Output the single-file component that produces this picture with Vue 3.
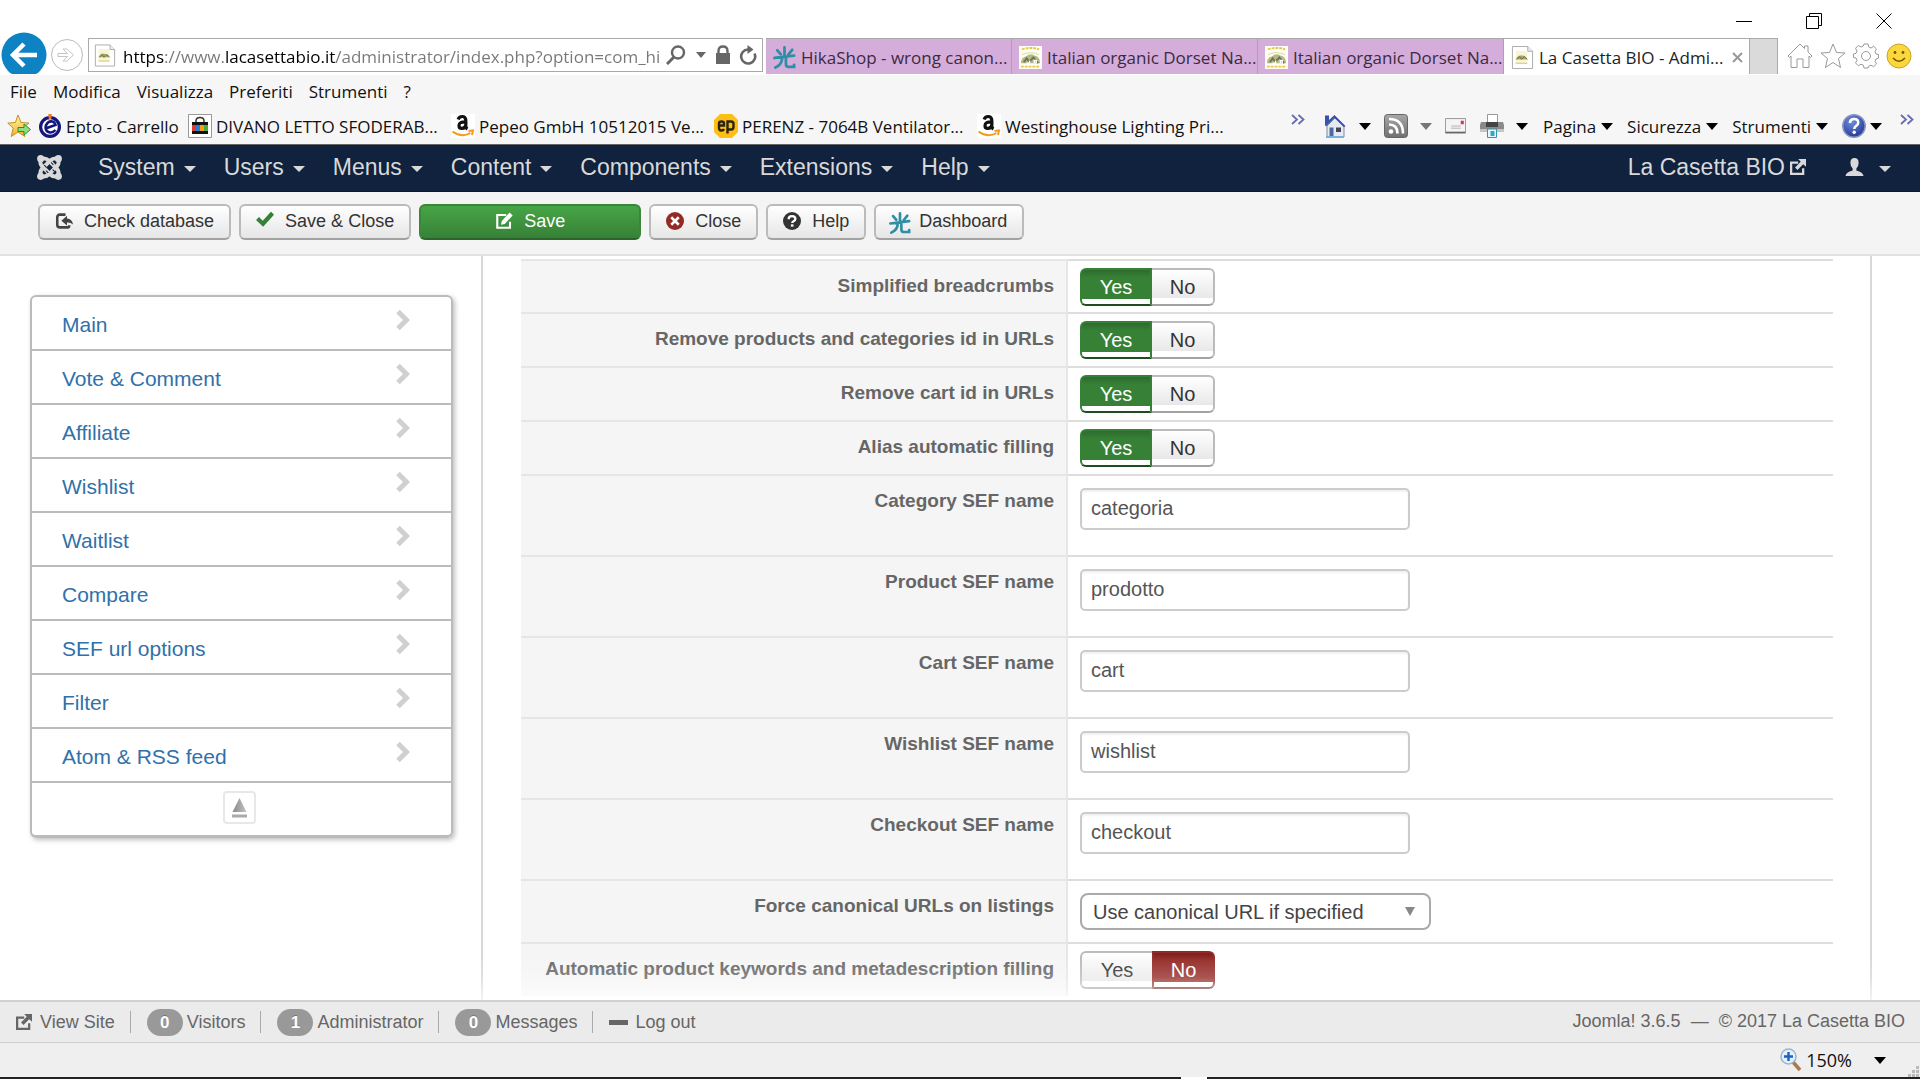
<script setup>
import { ref } from 'vue'

const address = ref('https://www.lacasettabio.it/administrator/index.php?option=com_hi')

const tabs = [
  { icon: 'hika', title: 'HikaShop - wrong canon...' },
  { icon: 'bio', title: 'Italian organic Dorset Na...' },
  { icon: 'bio', title: 'Italian organic Dorset Na...' },
  { icon: 'page', title: 'La Casetta BIO - Admi...', active: true }
]

const fileMenu = ['File', 'Modifica', 'Visualizza', 'Preferiti', 'Strumenti', '?']

const bookmarks = [
  { icon: 'epto', title: 'Epto - Carrello' },
  { icon: 'bag', title: 'DIVANO LETTO SFODERAB...' },
  { icon: 'amazon', title: 'Pepeo GmbH 10512015 Ve...' },
  { icon: 'ep', title: 'PERENZ - 7064B Ventilator...' },
  { icon: 'amazon', title: 'Westinghouse Lighting Pri...' }
]

const commands = ['Pagina', 'Sicurezza', 'Strumenti']

const adminMenu = ['System', 'Users', 'Menus', 'Content', 'Components', 'Extensions', 'Help']

const tools = [
  { icon: 'check-db', label: 'Check database' },
  { icon: 'tick', label: 'Save & Close' },
  { icon: 'edit', label: 'Save', primary: true },
  { icon: 'cancel', label: 'Close' },
  { icon: 'question', label: 'Help' },
  { icon: 'hika', label: 'Dashboard' }
]

const sections = [
  'Main', 'Vote & Comment', 'Affiliate', 'Wishlist', 'Waitlist',
  'Compare', 'SEF url options', 'Filter', 'Atom & RSS feed'
]

const settings = ref([
  { id: 'breadcrumbs', type: 'toggle', label: 'Simplified breadcrumbs', value: 'Yes' },
  { id: 'remove-id', type: 'toggle', label: 'Remove products and categories id in URLs', value: 'Yes' },
  { id: 'remove-cart-id', type: 'toggle', label: 'Remove cart id in URLs', value: 'Yes' },
  { id: 'alias', type: 'toggle', label: 'Alias automatic filling', value: 'Yes' },
  { id: 'category-sef', type: 'text', label: 'Category SEF name', value: 'categoria' },
  { id: 'product-sef', type: 'text', label: 'Product SEF name', value: 'prodotto' },
  { id: 'cart-sef', type: 'text', label: 'Cart SEF name', value: 'cart' },
  { id: 'wishlist-sef', type: 'text', label: 'Wishlist SEF name', value: 'wishlist' },
  { id: 'checkout-sef', type: 'text', label: 'Checkout SEF name', value: 'checkout' },
  { id: 'canonical', type: 'select', label: 'Force canonical URLs on listings', value: 'Use canonical URL if specified' },
  { id: 'keywords', type: 'toggle', label: 'Automatic product keywords and metadescription filling', value: 'No' }
])

const counters = [
  { count: 0, label: 'Visitors' },
  { count: 1, label: 'Administrator' },
  { count: 0, label: 'Messages' }
]
</script>

<template>
  <div class="window">
    <svg class="defs" aria-hidden="true">
      <linearGradient id="g-star" x1="0" y1="0" x2="0" y2="1"><stop offset="0" stop-color="#fff6b0" /><stop offset="1" stop-color="#f0b429" /></linearGradient>
      <linearGradient id="g-rss" x1="0" y1="0" x2="0" y2="1"><stop offset="0" stop-color="#a8a8a8" /><stop offset="1" stop-color="#707070" /></linearGradient>
      <radialGradient id="g-help" cx=".4" cy=".3" r=".8"><stop offset="0" stop-color="#6f8fe0" /><stop offset="1" stop-color="#1c3190" /></radialGradient>
      <linearGradient id="g-up" x1="0" y1="0" x2="1" y2="0"><stop offset="0" stop-color="#888" /><stop offset="1" stop-color="#c4c4c4" /></linearGradient>
      <symbol id="hika" viewBox="0 0 24 24">
        <g fill="none" stroke="#2f8ea3" stroke-width="2.9" stroke-linecap="round"><path d="M12 1.500V11M4.500 4.500l3.500 4M20 4l-4 5M1.500 12.500L22 10M9.500 12.500C9.500 17 7 20.500 2.500 22.500M13.500 12v7c0 2 1 2.800 3 2.800h5.500v-2" /></g>
      </symbol>
      <symbol id="bio" viewBox="0 0 24 24">
        <path fill="#fffef4" d="M0 0h24v24H0z" /><path d="M3 3.500q9-3 18 0M2 21.500h20" stroke="#e5c94a" stroke-width="2" stroke-dasharray="3 1" fill="none" />
        <path d="M2 18q0-6 5-7q5-4 9-1q6 1 6 8z" fill="#b5b98a" /><path d="M5 17l3-4 3 4M11 16l4-4 5 6" stroke="#6d774e" stroke-width="2" fill="none" /><path d="M8 18h3v-3M16 18v-3h2v3" stroke="#fff" stroke-width="1.500" fill="none" /><path d="M3 9q9-4 18 0" stroke="#d6d99a" fill="none" />
      </symbol>
      <symbol id="page" viewBox="0 0 24 24">
        <path d="M1.500.5h16l5 5v18h-21z" fill="#fff" stroke="#a9a9a9" /><path d="M17.500.5v5h5" fill="#eee" stroke="#a9a9a9" /><path d="M5 5h12v14H5z" fill="#f8f4d4" /><path d="M5 14q2-5 6-4q5 0 6 4z" fill="#a4a96b" /><path d="M6 14l3-3 2 3 3-3 3 3" stroke="#6a724c" fill="none" /><path d="M5 18h12" stroke="#dcc564" />
      </symbol>
      <symbol id="epto" viewBox="0 0 24 24">
        <circle cx="12" cy="13" r="9.400" fill="#fff" stroke="#14157d" stroke-width="3.200" /><path d="M7.500 14.500l10-3.500c-1-4-5-4.500-7.500-2.500-3.500 3-3 8 .5 9.500 2.500 1 5 .2 7-2" fill="none" stroke="#14157d" stroke-width="2.600" /><path d="M10.300 0h3.400l-.5 5h-2.400z" fill="#f17a21" />
      </symbol>
      <symbol id="bag" viewBox="0 0 24 24">
        <path d="M.5.5h23v23H.5z" fill="#fff" stroke="#999" /><path d="M8 9V7q0-3.500 4-3.500T16 7v2" fill="none" stroke="#333" stroke-width="1.500" /><path d="M4 8h16v12H4z" fill="#111" /><path d="M4 11h4v6H4z" fill="#e03c31" /><path d="M8 11h4v6H8z" fill="#2e7bd0" /><path d="M12 11h4v6h-4z" fill="#f1a01e" /><path d="M16 11h4v6h-4z" fill="#53a735" />
      </symbol>
      <symbol id="amazon" viewBox="0 0 24 24">
        <path fill="#fff" d="M0 0h24v24H0z" /><path d="M7.200 5.500Q8 2.500 11.200 2.500t3.600 3.500V12q0 2 1.700 3M15 7.800q-7-.3-7 3.600 0 3 2.700 3 4.300 0 4.300-6" fill="none" stroke="#111" stroke-width="3.200" /><path d="M1.500 17.500q9 6.500 18 1.500M17.500 17l4.500-.5-1 4.500" fill="none" stroke="#f79b1c" stroke-width="2" />
      </symbol>
      <symbol id="ep" viewBox="0 0 24 24">
        <path d="M6 0h12l6 6v12l-6 6H6l-6-6V6z" fill="#fdbf13" /><path d="M5 11.500h5V9.500q0-2-2.500-2T5 9.500V14q0 2.500 2.500 2.500 2 0 2.500-1.500M13.500 19.500V7.500H17q2.500 0 2.500 2.500v3q0 2.500-2.500 2.500h-3" fill="none" stroke="#2b2410" stroke-width="2.400" />
      </symbol>
      <symbol id="fav-add" viewBox="0 0 24 24">
        <path d="M11 1l3 7.500 8 .6-6.200 5 2 8.400L11 18l-6.800 4.500 2-8.400L.8 9.100l7.600-.6z" fill="url(#g-star)" stroke="#c98f1c" /><path d="M11 13.500h6v-3.500l6.500 5.500-6.500 5.500v-3.500h-6z" fill="#8be07d" stroke="#2f8b2f" />
      </symbol>
      <symbol id="house" viewBox="0 0 24 24">
        <path d="M4 12l8-8 9 8v11H4z" fill="#e4e9f2" stroke="#7c8aa6" /><path d="M2 1.500h4V6l5.500-5L22.500 12l-1.500 1.300L11.500 4 3 12.500 2 11z" fill="#3a52ad" /><path d="M6.500 13.500h4v9h-4z" fill="#4c6aa0" /><path d="M13 13.500h5v4.500h-5z" fill="#445" /><path d="M3 23h18" stroke="#78b0d8" stroke-width="2" />
      </symbol>
      <symbol id="rss" viewBox="0 0 24 24">
        <rect x=".5" y=".5" width="23" height="23" rx="3" fill="url(#g-rss)" stroke="#666" /><circle cx="7" cy="17.500" r="2.300" fill="#fff" /><path d="M5 10.500q8.500 0 8.500 9M5 5q14 0 14 14.500" fill="none" stroke="#fff" stroke-width="2.600" />
      </symbol>
      <symbol id="mail" viewBox="0 0 24 18">
        <path d="M.5.5h23v16H.5z" fill="#f4f4f4" stroke="#8b8b8b" /><path d="M.5 16.500h23" stroke="#666" stroke-width="2" /><path d="M7 9h11M7 11.500h11" stroke="#aaa" /><path d="M18 3h3.500v4H18z" fill="#d23a50" />
      </symbol>
      <symbol id="printer" viewBox="0 0 24 24">
        <path d="M7.500.5h10v9h-10z" fill="#fff" stroke="#999" /><path d="M1 8h22l1 3v7H0v-7z" fill="#8a8a8a" /><path d="M6 8h12v5H6z" fill="#444" /><path d="M0 15h24v3H0z" fill="#c5c5c5" /><path d="M7.500 15h9v8.500h-9z" fill="#e8f7fc" stroke="#3693ab" /><path d="M10.500 17h4v5h-4z" fill="#30a7c9" />
      </symbol>
      <symbol id="help-ball" viewBox="0 0 24 24">
        <circle cx="12" cy="12" r="11.200" fill="url(#g-help)" stroke="#8c97bd" stroke-width="1.500" /><path d="M8 9q0-4 4.200-4T16.200 8.800q0 2-2.200 3.200-1.700 1-1.700 3" fill="none" stroke="#fff" stroke-width="2.600" /><circle cx="12.200" cy="18.300" r="1.700" fill="#fff" />
      </symbol>
      <symbol id="check-db" viewBox="0 0 24 24">
        <path d="M14 3.500H6.500Q3 3.500 3 7v10q0 3.500 3.500 3.500H17q2 0 2-3" fill="none" stroke="#444" stroke-width="3.400" /><path d="M8.500 11.500L16 5v3.500q7 .5 8 8-3.500-3-8-2.500v4z" fill="#444" />
      </symbol>
      <symbol id="tick" viewBox="0 0 24 24"><path d="M0 10.500l4-4 5 5L20-.5l4 4L9.500 19.500z" fill="#378137" /></symbol>
      <symbol id="edit" viewBox="0 0 24 24">
        <path d="M15 4H3v17h17V13" fill="none" stroke="currentColor" stroke-width="2.800" /><path d="M8 17l1-5L19.500.8l4 3.700L13 16z" fill="currentColor" />
      </symbol>
      <symbol id="newtab" viewBox="0 0 24 24">
        <path d="M13 5H3v16h17V13" fill="none" stroke="currentColor" stroke-width="3.200" /><path d="M13 0h11v11l-4-3.500-8 8L8.500 12l8-8z" fill="currentColor" />
      </symbol>
      <symbol id="cancel" viewBox="0 0 24 24"><circle cx="12" cy="12" r="12" fill="#942a25" /><path d="M7 7l10 10M17 7L7 17" stroke="#fff" stroke-width="3.400" /></symbol>
      <symbol id="question" viewBox="0 0 24 24"><circle cx="12" cy="12" r="12" fill="#333" /><path d="M7.500 9.500Q7.500 5.500 12 5.500t4.500 3.700q0 2-2.500 3-1.700.8-1.700 2.600" fill="none" stroke="#fff" stroke-width="3" /><path d="M10.500 16.500h3.500v3h-3.500z" fill="#fff" /></symbol>
      <symbol id="joomla" viewBox="0 0 24 24">
        <g fill="currentColor"><circle cx="3.500" cy="3.500" r="3.400" /><circle cx="20.500" cy="3.500" r="3.400" /><circle cx="3.500" cy="20.500" r="3.400" /><circle cx="20.500" cy="20.500" r="3.400" /></g>
        <g fill="none" stroke="currentColor" stroke-width="3.800"><path d="M3.500 20Q2.500 15.500 5 13L12.500 5.500Q15.500 2.500 20 3.500" /><path d="M4 3.500Q8.500 2.500 11.500 5.500L19 13Q21.500 15.500 20.500 20" /><path d="M3.500 4Q2.500 8.500 5 11L12.500 18.500Q15.500 21.500 20 20.500" /><path d="M20.500 4Q21.500 8.500 19 11L11.500 18.500Q8.500 21.500 4 20.500" /></g>
        <path d="M7 9.800l2 2M13.500 7.200l2.200 2.200M15 14l2 2M8.600 15l2.200 2.200" stroke="#10223e" stroke-width="1" />
      </symbol>
      <symbol id="user" viewBox="0 0 24 24"><path d="M12 0q5.500 0 5.500 6.500 0 4.500-3 7.500v2.500q9 2 9.500 7.500H0q.5-5.500 9.500-7.500V14q-3-3-3-7.500Q6.500 0 12 0z" fill="currentColor" /></symbol>
    </svg>

    <header class="chrome">
      <div class="titlebar">
        <button class="win" aria-label="Riduci"><svg width="16" height="16" viewBox="0 0 16 16"><path d="M0 8.500h16" stroke="#000" /></svg></button>
        <button class="win" aria-label="Ripristina"><svg width="16" height="16" viewBox="0 0 16 16"><path d="M.5 3.500h12v12H.5zM3.500 3.500v-3h12v12h-3" fill="none" stroke="#000" /></svg></button>
        <button class="win" aria-label="Chiudi"><svg width="16" height="16" viewBox="0 0 16 16"><path d="M.5.5l15 15M15.500.5l-15 15" stroke="#000" /></svg></button>
      </div>

      <div class="navrow">
        <button class="back" aria-label="Indietro"><svg width="46" height="42" viewBox="0 0 46 42"><circle cx="23" cy="23" r="22.500" fill="#0d83c4" /><path d="M36 23H13M23 12L12 23l11 11" fill="none" stroke="#fff" stroke-width="4.500" /></svg></button>
        <button class="forward" aria-label="Avanti"><svg width="34" height="34" viewBox="0 0 34 34"><circle cx="17" cy="17" r="15.500" fill="#fff" stroke="#bbb" /><path d="M8 15.500h9.500L13 11h4l6.500 6-6.500 6h-4l4.500-4.500H8z" fill="none" stroke="#c4c4c4" /></svg></button>
        <div class="address">
          <svg width="22" height="23"><use href="#page" /></svg>
          <input v-model="address" aria-label="Indirizzo" spellcheck="false">
          <svg width="20" height="20" viewBox="0 0 20 20"><circle cx="12" cy="7.500" r="6" fill="none" stroke="#666" stroke-width="2.400" /><path d="M8 12l-7 7" stroke="#666" stroke-width="3" /></svg>
          <i class="arrow small"></i>
          <svg class="lock" width="16" height="20" viewBox="0 0 16 20"><path d="M3.500 9V6q0-4.500 4.500-4.500T12.500 6v3" fill="none" stroke="#666" stroke-width="2.400" /><path d="M1 8h14v11H1z" fill="#666" /></svg>
          <svg width="18" height="20" viewBox="0 0 18 20"><path d="M15.500 8.500A7 7 0 1 1 9 4.500" fill="none" stroke="#666" stroke-width="2.600" /><path d="M8.500 0v9l6-4.500z" fill="#666" /></svg>
        </div>
        <nav class="tabs">
          <a v-for="(tab, i) in tabs" :key="i" href="#" class="tab" :class="{ active: tab.active }">
            <svg width="23" height="23"><use :href="'#' + tab.icon" /></svg><span>{{ tab.title }}</span>
            <svg v-if="tab.active" class="tab-close" width="11" height="11" viewBox="0 0 11 11"><path d="M1 1l9 9M10 1l-9 9" stroke="#999" stroke-width="2" /></svg>
          </a>
          <button class="newtab" aria-label="Nuova scheda"></button>
        </nav>
        <div class="shortcuts">
          <svg width="26" height="26" viewBox="0 0 26 26"><path d="M1 13L13 1l4.500 4.500V3H21v6l4 4-1.500 1.500L22 13v11.500h-6V16h-6v8.500H4V13l-1.500 1.500z" fill="#fff" stroke="#999" /></svg>
          <svg width="26" height="26" viewBox="0 0 26 26"><path d="M13 1l3.500 8.500 8.500.5-6.500 5.500 2 9L13 19.500l-7.500 5 2-9L1 10l8.500-.5z" fill="#fff" stroke="#999" /></svg>
          <svg width="26" height="26" viewBox="0 0 26 26"><path d="M11 1h4l.7 3 2.300 1 2.700-1.700 2.800 2.800L22 8.700l1 2.300 2.500.5v3.700l-2.500.8-1 2.300 1.500 2.600-2.800 2.800-2.700-1.500-2.300 1L15 25h-4l-.7-2.800-2.300-1-2.700 1.500-2.800-2.800L4 17.300 3 15l-2.500-.5V11L3 10.300 4 8 2.500 5.300l2.800-2.800L8 4l2.300-1z" fill="#fff" stroke="#999" /><circle cx="13" cy="13" r="4.500" fill="none" stroke="#999" /></svg>
          <svg width="26" height="26" viewBox="0 0 26 26"><circle cx="13" cy="13" r="12" fill="#fcd73b" stroke="#cba32b" /><circle cx="9" cy="9.500" r="1.400" fill="#6e5200" /><circle cx="17" cy="9.500" r="1.400" fill="#6e5200" /><path d="M7 15q6 6.500 12 0" fill="none" stroke="#6e5200" stroke-width="1.500" /></svg>
        </div>
      </div>

      <div class="bars">
        <nav class="filemenu"><button v-for="item in fileMenu" :key="item">{{ item }}</button></nav>
        <div class="linkbar">
          <nav class="bookmarks">
            <button class="fav" aria-label="Aggiungi ai preferiti"><svg width="24" height="24"><use href="#fav-add" /></svg></button>
            <a v-for="(mark, i) in bookmarks" :key="i" href="#"><svg width="24" height="24"><use :href="'#' + mark.icon" /></svg>{{ mark.title }}</a>
          </nav>
          <div class="commands">
            <button class="more" aria-label="Altri preferiti"><svg width="14" height="11" viewBox="0 0 14 11"><path d="M1 1l5 4.500L1 10M7.500 1l5 4.500-5 4.500" fill="none" stroke="#6a6ab0" stroke-width="1.800" /></svg></button>
            <button class="pic" aria-label="Home"><svg width="24" height="24"><use href="#house" /></svg><i class="arrow"></i></button>
            <button class="pic" aria-label="Feed"><svg width="24" height="24"><use href="#rss" /></svg><i class="arrow faded"></i></button>
            <button class="letter" aria-label="Posta"><svg width="21" height="16"><use href="#mail" /></svg></button>
            <button class="pic last" aria-label="Stampa"><svg width="24" height="24"><use href="#printer" /></svg><i class="arrow"></i></button>
            <button v-for="item in commands" :key="item" class="word">{{ item }}<i class="arrow"></i></button>
            <button class="word tight" aria-label="Guida"><svg width="24" height="24"><use href="#help-ball" /></svg><i class="arrow"></i></button>
            <button class="more end" aria-label="Altri comandi"><svg width="14" height="11" viewBox="0 0 14 11"><path d="M1 1l5 4.500L1 10M7.500 1l5 4.500-5 4.500" fill="none" stroke="#6a6ab0" stroke-width="1.800" /></svg></button>
          </div>
        </div>
      </div>
    </header>

    <nav class="adminbar">
      <a href="#" class="brand" aria-label="Joomla"><svg width="25" height="25"><use href="#joomla" /></svg></a>
      <a v-for="item in adminMenu" :key="item" href="#" class="entry">{{ item }}<i class="caret"></i></a>
      <a href="#" class="site">La Casetta BIO<svg width="17" height="17"><use href="#newtab" /></svg></a>
      <a href="#" class="account" aria-label="Account"><svg width="19" height="18"><use href="#user" /></svg><i class="caret"></i></a>
    </nav>

    <div class="toolbar">
      <button v-for="tool in tools" :key="tool.label" class="tool" :class="{ primary: tool.primary }">
        <svg v-if="tool.icon === 'hika'" class="low" width="22" height="22"><use href="#hika" /></svg>
        <svg v-else width="18" height="18"><use :href="'#' + tool.icon" /></svg>{{ tool.label }}
      </button>
    </div>

    <main class="workspace">
      <aside class="side">
        <nav class="sections">
          <a v-for="item in sections" :key="item" href="#">{{ item }}<svg width="14" height="22" viewBox="0 0 14 22"><path d="M2 2.500l8.500 8.500L2 19.500" fill="none" stroke="#d0d0d0" stroke-width="5" /></svg></a>
          <div class="totop"><button aria-label="Torna su"><svg width="15" height="20" viewBox="0 0 15 20"><path d="M7.500 0L14.500 14H.5z" fill="url(#g-up)" /><path d="M0 16.500h15v3H0z" fill="#aaa" /></svg></button></div>
        </nav>
      </aside>

      <section class="panel">
        <table>
          <tbody>
            <tr v-for="row in settings" :key="row.id" :class="row.type">
              <th scope="row"><label :for="row.type === 'toggle' ? row.id + '-' + row.value : row.id">{{ row.label }}</label></th>
              <td>
                <div v-if="row.type === 'toggle'" class="switch" role="radiogroup" :aria-label="row.label">
                  <template v-for="choice in ['Yes', 'No']" :key="choice">
                    <input :id="row.id + '-' + choice" v-model="row.value" type="radio" :name="row.id" :value="choice">
                    <label :for="row.id + '-' + choice" :class="choice.toLowerCase()">{{ choice }}</label>
                  </template>
                </div>
                <input v-else-if="row.type === 'text'" :id="row.id" v-model="row.value" class="field" type="text">
                <div v-else class="picker">
                  <select :id="row.id" v-model="row.value"><option>Use canonical URL if specified</option></select>
                  <i></i>
                </div>
              </td>
            </tr>
          </tbody>
        </table>
      </section>
    </main>

    <footer class="sitebar">
      <a href="#" class="first"><svg width="17" height="17"><use href="#newtab" /></svg>View Site</a>
      <a v-for="item in counters" :key="item.label" href="#" class="counter"><b>{{ item.count }}</b>{{ item.label }}</a>
      <a href="#" class="logout"><svg width="19" height="5"><path d="M0 0h19v5H0z" fill="#666" /></svg>Log out</a>
      <p>Joomla! 3.6.5 &nbsp;—&nbsp; © 2017 La Casetta BIO</p>
    </footer>

    <div class="status">
      <button class="zoom">
        <svg width="22" height="24" viewBox="0 0 22 24"><path d="M13 14l7 8" stroke="#a87b51" stroke-width="3.500" /><circle cx="8.500" cy="8.500" r="7.500" fill="#e4f1fc" stroke="#9fb4cc" stroke-width="1.500" /><path d="M8.500 4v9M4 8.500h9" stroke="#1c62c4" stroke-width="2.400" /></svg>
        <span>150%</span><i class="arrow small dark"></i>
      </button>
      <svg class="grip" width="12" height="12" viewBox="0 0 12 12"><path d="M0 9h3v3H0zM4 9h3v3H4zM8 9h3v3H8zM4 5h3v3H4zM8 5h3v3H8zM8 1h3v3H8z" fill="#bbb" /></svg>
    </div>
    <div class="taskbar"><span></span><b></b><span></span></div>
  </div>
</template>

<style>
body { margin: 0; background: #fff; }
</style>

<style scoped>
* { box-sizing: border-box; }
.window { font-family: "Liberation Sans", Arial, sans-serif; color: #333; }
.defs { position: absolute; width: 0; height: 0; }
svg { flex: none; display: block; }
a { color: inherit; text-decoration: none; }
button { border: 0; padding: 0; background: none; font: inherit; color: inherit; }
input, select { font: inherit; color: inherit; outline: 0; }

.chrome { font-family: "Open Sans", "Noto Sans", sans-serif; font-size: 17px; color: #111; }
.titlebar { height: 38px; display: flex; justify-content: flex-end; align-items: center; gap: 54px; padding: 4px 28px 0 0; }
.navrow { height: 37px; display: flex; align-items: flex-start; padding-left: 1px; }
.back { margin-top: -6px; }
.forward { margin-left: 3px; }
.address { flex: 1; min-width: 0; height: 34px; margin-left: 4px; padding: 0 5px; display: flex; align-items: center; border: 1px solid #aaa; }
.address input {
  flex: 1; min-width: 0; height: 30px; border: 0; padding: 2px 0 0; margin: 0 4px 0 7px;
  background: linear-gradient(90deg, #000 41px, #777 41px 101px, #000 101px 213px, #777 213px);
  -webkit-background-clip: text; background-clip: text; -webkit-text-fill-color: transparent;
}
.address .arrow { margin: 0 9px 0 10px; }
.lock { margin-right: 8px; }
.arrow { flex: none; width: 0; height: 0; border: 6px solid transparent; border-top: 7px solid #000; border-bottom: 0; }
.arrow.small { border-width: 5px; border-top-width: 6px; border-top-color: #666; border-bottom: 0; }
.arrow.dark { border-width: 7px 6px 0; border-top-color: #000; }
.arrow.faded { border-top-color: #777; }
.tabs { display: flex; height: 36px; margin-left: 3px; }
.tab { width: 246px; display: flex; align-items: center; gap: 5px; padding: 2px 0 0 7px; background: #d5addb; border-top: 1px solid #aaa; border-right: 1px solid #b49abb; color: #3a2b3d; white-space: nowrap; }
.tab.active { background: #fff; color: #222; border-right-color: #aaa; }
.tab-close { margin-left: auto; margin-right: 6px; }
.newtab { width: 28px; background: #dadada; border: solid #aaa; border-width: 1px 1px 0 0; }
.shortcuts { display: flex; gap: 7px; padding: 5px 8px 0 9px; }

.bars { background: #f6f6f6; border-bottom: 1px solid #666; height: 70px; }
.filemenu { display: flex; gap: 16px; padding-left: 10px; height: 33px; align-items: center; }
.linkbar { display: flex; height: 36px; align-items: center; }
.bookmarks { flex: 1; display: flex; align-items: center; padding-left: 7px; min-width: 0; white-space: nowrap; }
.bookmarks a { display: flex; align-items: center; gap: 4px; width: 263px; }
.bookmarks a:nth-of-type(1) { width: 150px; }
.fav { margin-right: 7px; }
.commands { flex: none; display: flex; align-items: center; }
.commands button { display: flex; align-items: center; }
.commands .pic { gap: 12px; padding-right: 13px; }
.commands .pic.last { padding-right: 15px; }
.commands .letter { padding-right: 14px; }
.commands .word { gap: 5px; padding-right: 14px; }
.commands .tight { gap: 4px; padding-right: 18px; }
.commands .more { align-self: flex-start; padding-right: 18px; }
.commands .more.end { padding-right: 6px; }

.adminbar { height: 47px; background: #10223e; border-bottom: 1px solid #0b172a; display: flex; align-items: center; padding: 0 29px 2px 37px; font-size: 23px; color: #d9d9d9; }
.adminbar a { display: flex; align-items: center; }
.brand { margin-right: 36px; }
.entry { gap: 9px; margin-right: 28px; }
.caret { width: 0; height: 0; border: 6px solid transparent; border-top: 6px solid #d9d9d9; border-bottom: 0; margin-top: 4px; }
.site { gap: 4px; margin-left: auto; }
.account { gap: 15px; margin-left: 39px; }

.toolbar { height: 64px; background: #f4f4f4; border-bottom: 2px solid #e2e2e2; padding: 12px 38px; display: flex; gap: 8px; align-items: flex-start; }
.tool { height: 36px; display: flex; align-items: center; justify-content: center; gap: 11px; padding: 0 15px 2px; font-size: 18px; color: #333; border: 2px solid #bbb; border-bottom-color: #a2a2a2; border-radius: 6px; background: linear-gradient(#fff, #e6e6e6); }
.tool .low { margin: 4px -3px 0 -2px; }
.tool.primary { width: 222px; color: #fff; border-color: #3a873a; border-bottom-color: #2b652b; background: linear-gradient(#46a546, #378137); }

.workspace { position: relative; display: flex; }
.workspace::after { content: ""; position: absolute; left: 456px; right: 0; bottom: 0; height: 46px; background: linear-gradient(rgba(255, 255, 255, 0), rgba(255, 255, 255, .2) 50%, rgba(255, 255, 255, .7)); pointer-events: none; }
.side { flex: none; width: 481px; padding: 39px 28px 0 30px; }
.sections { border: 2px solid #bbb; border-bottom-width: 3px; border-radius: 6px; box-shadow: 2px 2px 5px rgba(0, 0, 0, .25); font-size: 21px; color: #3071a9; }
.sections a { height: 54px; display: flex; justify-content: space-between; align-items: center; padding: 4px 41px 0 30px; border-bottom: 2px solid #bbb; }
.sections a svg { margin-top: -10px; }
.totop { height: 52px; display: flex; justify-content: center; align-items: center; padding: 0 5px 3px 0; }
.totop button { width: 33px; height: 33px; display: flex; align-items: center; justify-content: center; border: 2px solid #e8e8e8; border-radius: 4px; }

.panel { flex: 1; margin-right: 48px; padding: 3px 37px 4px 38px; border: solid #d8d8d8; border-width: 0 2px; }
table { width: 100%; border-collapse: separate; border-spacing: 0; }
th, td { padding: 0; border-top: 2px solid #ddd; vertical-align: top; text-align: left; }
th { width: 547px; padding: 14px 12px 0 0; border-right: 2px solid #e6e6e6; border-top-color: #e6e6e6; background: #f5f5f5; text-align: right; font-size: 19px; line-height: 22px; color: #666; white-space: nowrap; }
td { padding-left: 12px; font-size: 20px; color: #333; }
tr.toggle { height: 54px; }
tr.toggle:first-child { height: 53px; }
tr.text { height: 81px; }
tr.select { height: 63px; }
.toggle td { padding-top: 7px; }
.text td, .select td { padding-top: 12px; }
.switch { display: flex; }
.switch input { position: absolute; opacity: 0; pointer-events: none; }
.switch label { height: 38px; width: 72px; text-align: center; line-height: 34px; border: 2px solid #bbb; border-bottom-color: #a2a2a2; background: linear-gradient(#fff, #e8e8e8 28px, #fff 28px); }
.switch .yes { border-radius: 6px 0 0 6px; border-right: 0; }
.switch .no { width: 63px; border-radius: 0 6px 6px 0; border-left: 0; }
.switch input:checked + .yes { color: #fff; border: 2px solid #378137; border-bottom-color: #204d20; background: linear-gradient(#2d6b2d, #378137 8px 29px, #fff 29px); }
.switch input:checked + .no { color: #fff; border: 2px solid #942a25; border-bottom-color: #6b1c19; background: linear-gradient(#7d201c, #942a25 8px 29px, #fff 29px); }
.field { display: block; width: 330px; height: 42px; padding: 0 9px 2px; border: 2px solid #ccc; border-radius: 5px; background: #fff; color: #555; box-shadow: inset 0 2px 2px rgba(0, 0, 0, .06); }
.picker { position: relative; width: 351px; }
.picker select { display: block; appearance: none; width: 100%; height: 37px; padding: 0 11px; border: 2px solid #aaa; border-radius: 8px; background: #fff; color: #444; }
.picker i { position: absolute; right: 16px; top: 14px; border: 5px solid transparent; border-top: 9px solid #888; border-bottom: 0; pointer-events: none; }

.sitebar { height: 43px; border-top: 2px solid #d0d0d0; border-bottom: 1px solid #d0d0d0; background: #ebebeb; display: flex; align-items: center; padding: 0 15px; font-size: 18px; color: #666; white-space: nowrap; }
.sitebar a { display: flex; align-items: center; }
.first { gap: 8px; }
.sitebar .counter, .logout { margin-left: 15px; }
.counter::before, .logout::before { content: ""; width: 1px; height: 22px; background: #aaa; margin-right: 16px; }
.counter b { width: 36px; height: 27px; margin-right: 4px; border-radius: 14px; background: #999; color: #fff; font-size: 17px; line-height: 27px; text-align: center; text-shadow: 0 -1px 0 rgba(0, 0, 0, .25); }
.logout svg { margin-right: 7px; }
.sitebar p { margin: 0 0 2px auto; }

.status { height: 34px; background: #efefef; display: flex; justify-content: flex-end; align-items: center; font-family: "Open Sans", "Noto Sans", sans-serif; font-size: 18px; color: #111; }
.zoom { display: flex; align-items: center; gap: 4px; }
.zoom .arrow { margin-left: 18px; }
.grip { align-self: flex-end; margin-left: 22px; }
.taskbar { display: flex; height: 2px; background: #fff; }
.taskbar span { flex: 1181; background: #222; }
.taskbar b { flex: 26; }
.taskbar span:last-child { flex: 713; }
</style>
